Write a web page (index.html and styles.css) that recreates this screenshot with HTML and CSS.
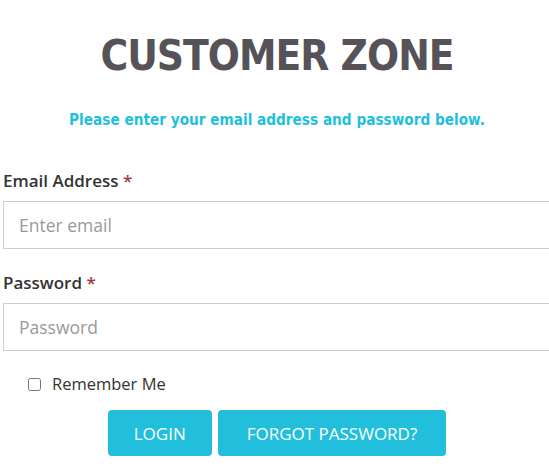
FILE: index.html
```html
<!DOCTYPE html>
<html>
<head>
<meta charset="utf-8">
<link rel="stylesheet" href="styles.css">
</head>
<body>
<div class="zone">
  <h1 class="title">CUSTOMER ZONE</h1>
  <p class="intro">Please enter your email address and password below.</p>
  <form class="form">
    <div class="field">
      <label class="label">Email Address <span class="req">*</span></label>
      <input class="input" type="email" placeholder="Enter email">
    </div>
    <div class="field">
      <label class="label">Password <span class="req">*</span></label>
      <input class="input" type="password" placeholder="Password">
    </div>
    <div class="check">
      <input class="box" type="checkbox" id="rem">
      <label class="check-label" for="rem">Remember Me</label>
    </div>
    <div class="actions">
      <button class="btn btn-login" type="button">LOGIN</button>
      <button class="btn btn-forgot" type="button">FORGOT PASSWORD?</button>
    </div>
  </form>
</div>
</body>
</html>
```
FILE: styles.css
```css
html, body {
  margin: 0;
  padding: 0;
  background: #fff;
  overflow: hidden;
}
.zone {
  width: 548px;
  padding-left: 3px;
  font-family: "Open Sans", sans-serif;
}
.title {
  margin: 0;
  padding-top: 30px;
  text-align: center;
  font-family: "DejaVu Sans", sans-serif;
  font-stretch: condensed;
  font-weight: bold;
  font-size: 42px;
  line-height: 52px;
  color: #555258;
  letter-spacing: -1px;
}
.intro {
  margin: 0;
  padding-top: 28px;
  text-align: center;
  font-family: "DejaVu Sans", sans-serif;
  font-stretch: condensed;
  font-weight: bold;
  font-size: 15.2px;
  line-height: 20px;
  color: #22bfdd;
}
.form {
  margin-top: 39px;
}
.field {
  margin-bottom: 22px;
}
.label {
  display: block;
  font-weight: 600;
  font-size: 17px;
  line-height: 24px;
  color: #333;
  margin-bottom: 8px;
}
.req {
  color: #a03a3a;
}
.input {
  display: block;
  box-sizing: border-box;
  width: 100%;
  height: 48px;
  margin: 0;
  padding: 0 15px;
  border: 1px solid #ccc;
  border-radius: 0;
  font-family: "Open Sans", sans-serif;
  font-size: 17.5px;
  color: #555;
}
.input::placeholder {
  color: #999;
}
.check {
  display: flex;
  align-items: center;
  padding-left: 25px;
  margin-top: -1px;
}
.box {
  margin: 0 11px 0 0;
  width: 13px;
  height: 13px;
}
.check-label {
  font-size: 16.5px;
  line-height: 24px;
  color: #333;
}
.actions {
  display: flex;
  justify-content: center;
  gap: 6px;
  margin-top: 14px;
}
.btn {
  height: 46px;
  border: none;
  border-radius: 4px;
  background: #22bfdd;
  color: #fff;
  font-family: "Open Sans", sans-serif;
  font-size: 17px;
}
.btn-login {
  padding: 0 26px;
}
.btn-forgot {
  padding: 0 29px;
}
```
